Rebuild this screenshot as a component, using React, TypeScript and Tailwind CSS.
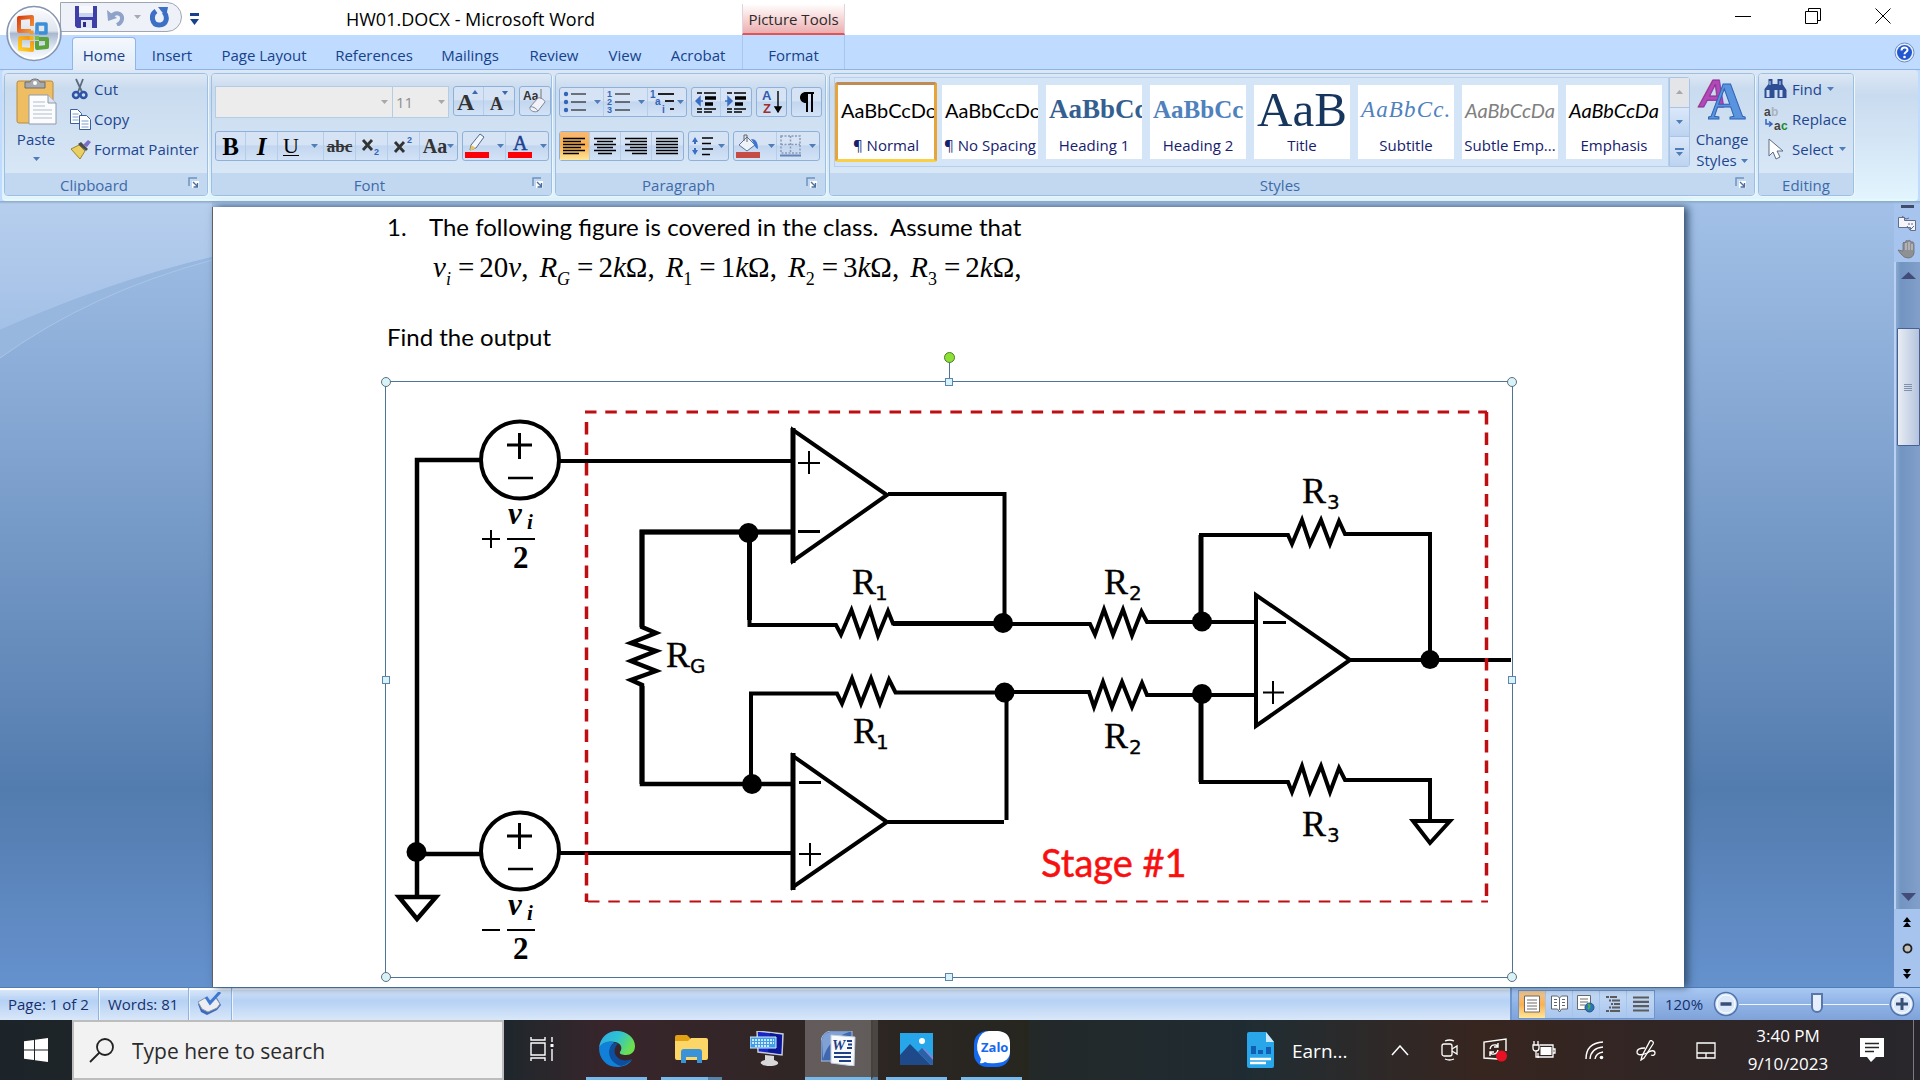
import { useState, type ReactNode } from 'react';
import clsx from 'clsx';

const tabs = [
  { name: 'Home', width: 'w-16' },
  { name: 'Insert', width: 'w-[72px]' },
  { name: 'Page Layout', width: 'w-[112px]' },
  { name: 'References', width: 'w-[108px]' },
  { name: 'Mailings', width: 'w-[84px]' },
  { name: 'Review', width: 'w-[84px]' },
  { name: 'View', width: 'w-[58px]' },
  { name: 'Acrobat', width: 'w-[88px]' },
];

const styleItems = [
  { name: '¶ Normal', sample: 'AaBbCcDc', look: 'font-[Lato,sans-serif] text-[20px] text-black' },
  { name: '¶ No Spacing', sample: 'AaBbCcDc', look: 'font-[Lato,sans-serif] text-[20px] text-black' },
  { name: 'Heading 1', sample: 'AaBbCc', look: 'font-["Liberation_Serif",serif] text-[27px] font-bold text-[#365f91]' },
  { name: 'Heading 2', sample: 'AaBbCc', look: 'font-["Liberation_Serif",serif] text-[25px] font-bold text-[#4f81bd]' },
  { name: 'Title', sample: 'AaB', look: 'font-["Liberation_Serif",serif] text-[49px] text-[#17365d]' },
  { name: 'Subtitle', sample: 'AaBbCc.', look: 'font-["Liberation_Serif",serif] text-[23px] italic tracking-wider text-[#4f81bd]' },
  { name: 'Subtle Emp...', sample: 'AaBbCcDa', look: 'font-[Lato,sans-serif] text-[20px] italic text-[#808080]' },
  { name: 'Emphasis', sample: 'AaBbCcDa', look: 'font-[Lato,sans-serif] text-[20px] italic text-black' },
];

function Arrow({ className = 'text-[#4f7db9]' }: { className?: string }) {
  return (
    <svg width="7" height="4" viewBox="0 0 7 4" className={clsx('shrink-0', className)}>
      <path d="M0 0h7L3.500 4z" fill="currentColor" />
    </svg>
  );
}

function Launcher() {
  return (
    <button aria-label="More options" className="absolute right-[7px] top-[4px]">
      <svg width="12" height="12" viewBox="0 0 12 12" fill="none">
        <path d="M1 9V1h8" stroke="#6f93bd" strokeWidth="1.500" />
        <path d="M4 4h7v7H4z" fill="#fff" />
        <path d="M5 5l4.500 4.500M9.500 6v4H5.500" stroke="#4a6f9e" strokeWidth="1.400" />
      </svg>
    </button>
  );
}

function Group({ title, className, launcher = true, children }: { title: string; className: string; launcher?: boolean; children: ReactNode }) {
  return (
    <section
      className={clsx(
        'flex flex-col overflow-hidden rounded-[4px] border border-[#9dbfe0] shadow-[1px_1px_0_#eef6fd,inset_1px_1px_0_#e8f1fb]',
        className,
      )}
    >
      <div className="flex h-[100px] bg-linear-to-b from-[#dde8f5] from-0% via-[#c9dbef] via-15% to-[#d8e7f6]">{children}</div>
      <div
        className={clsx(
          'relative flex flex-1 items-center justify-center bg-[#c1d8f0] pt-[2px] text-[15px] leading-5 text-[#3e6aaa]',
          launcher && 'pr-6',
        )}
      >
        {title}
        {launcher && <Launcher />}
      </div>
    </section>
  );
}

function Cells({ children }: { children: ReactNode }) {
  return (
    <div className="flex h-[30px] divide-x divide-[#b4cdea] rounded-[3px] border border-[#8fb0d9] bg-linear-to-b from-[#d5e3f4] from-45% via-[#c2d6ef] via-50% to-[#d3e3f6]">
      {children}
    </div>
  );
}

function Cell({ label, width, active, children }: { label: string; width: string; active?: boolean; children: ReactNode }) {
  return (
    <button
      aria-label={label}
      className={clsx(
        'flex shrink-0 items-center justify-center gap-1 text-black',
        width,
        active && 'bg-linear-to-b from-[#f8b973] via-[#fbb04e] to-[#ffe79a]',
      )}
    >
      {children}
    </button>
  );
}

function Lines({ rows }: { rows: number[][] }) {
  return (
    <svg width="23" height="18" viewBox="0 0 23 18" stroke="#000" strokeWidth="1.300">
      {rows.map(([a, b], i) => (
        <path key={i} d={`M${a} ${1.5 + i * 3}H${b}`} />
      ))}
    </svg>
  );
}

function OfficeOrb() {
  return (
    <button aria-label="Office Button" className="absolute left-[6px] top-[5px] z-10">
      <svg width="56" height="57" viewBox="0 0 56 57">
        <defs>
          <linearGradient id="orb" x1="0" y1="0" x2="0" y2="1">
            <stop offset="0" stopColor="#fdfdfe" />
            <stop offset=".45" stopColor="#dfe5ee" />
            <stop offset=".5" stopColor="#a9b8cf" />
            <stop offset=".75" stopColor="#dde6f2" />
            <stop offset="1" stopColor="#fff" />
          </linearGradient>
          <linearGradient id="orbRed" x1="0" y1="0" x2="1" y2="1">
            <stop offset="0" stopColor="#d9400f" />
            <stop offset="1" stopColor="#f59a3c" />
          </linearGradient>
          <linearGradient id="orbYellow" x1="0" y1="1" x2="1" y2="0">
            <stop offset="0" stopColor="#ffcf1f" />
            <stop offset="1" stopColor="#f0921c" />
          </linearGradient>
        </defs>
        <circle cx="28" cy="28.500" r="27" fill="url(#orb)" stroke="#8495b1" strokeWidth="1.500" />
        <circle cx="28" cy="28.500" r="25" fill="none" stroke="#fff" strokeWidth="1.500" />
        <g fill="none" strokeWidth="4" strokeLinejoin="round">
          <path d="M25 26H13V13l13-1v9" stroke="url(#orbRed)" />
          <path d="M31 27v-8h9v9h-7" stroke="#3b8fd6" strokeWidth="3.500" />
          <path d="M24 33H14v11l12 1V36" stroke="url(#orbYellow)" />
          <path d="M31 36v7l10-1v-8h-8" stroke="#5aa23a" />
        </g>
        <path d="M23.500 25.500h4v4h-4z" fill="#f29b30" />
        <path d="M29 25.500h4v4h-4z" fill="#4c9be0" />
        <path d="M23.500 31h4v4h-4z" fill="#f6b21b" />
        <path d="M29 31h4v4h-4z" fill="#7dbb45" />
      </svg>
    </button>
  );
}

function TitleBar() {
  return (
    <div className="flex h-[35px] bg-white pl-[60px]">
      <div className="relative mt-[2px] flex h-[30px] w-[122px] items-center rounded-r-[15px] border border-[#9ea6b2] bg-[#eef2f8] pl-[14px]">
        <button aria-label="Save">
          <svg width="22" height="22" viewBox="0 0 22 22">
            <path d="M0 0h22v22H2l-2-2z" fill="#3f3fa8" />
            <path d="M4 0h14v11H4z" fill="#f6f8fd" />
            <path d="M4 7h14v4H4z" fill="#c9d4ee" />
            <path d="M6 14h11v8H6z" fill="#dfe5f5" />
            <path d="M8 16h3v5H8z" fill="#2c2c86" />
          </svg>
        </button>
        <button aria-label="Undo" className="ml-[10px] flex items-center gap-[9px]">
          <svg width="18" height="17" viewBox="0 0 18 17" fill="none">
            <path d="M4 8c4-6 12-4 11 2-.3 3-3 5-5 6" stroke="#8fa3c8" strokeWidth="4" />
            <path d="M0 1l1 11 9-3z" fill="#8fa3c8" />
          </svg>
          <Arrow className="text-[#a5a9b0]" />
        </button>
        <button aria-label="Repeat" className="ml-[9px]">
          <svg width="20" height="21" viewBox="0 0 20 21" fill="none">
            <path d="M6 4C0 8 2 18 9 18c8 0 9-8 5-13" stroke="#3d6fc4" strokeWidth="5" />
            <path d="M8 0h10l-2 10z" fill="#3d6fc4" />
          </svg>
        </button>
      </div>
      <button aria-label="Customize Quick Access Toolbar" className="ml-[8px] mt-[3px] flex flex-col items-center justify-center gap-[3px]">
        <span className="h-[3px] w-[9px] bg-[#15428b]" />
        <svg width="9" height="6" viewBox="0 0 9 6">
          <path d="M0 0h9L4.500 6z" fill="#15428b" />
        </svg>
      </button>
      <h1 className="flex w-[543px] items-center justify-center pt-[3px] text-[18px] text-black">HW01.DOCX - Microsoft Word</h1>
      <div className="mt-1 flex w-[103px] items-center justify-center border-x border-b-2 border-x-[#dfd3de] border-b-[#e05555] bg-linear-to-b from-white to-[#ecaeb0] pt-[2px] text-[15px] text-[#2b2b2b]">
        Picture Tools
      </div>
      <div className="ml-auto mr-[2px] flex items-start">
        <button aria-label="Minimize" className="flex h-8 w-[70px] items-center justify-center">
          <svg width="16" height="16" viewBox="0 0 16 16" stroke="#000"><path d="M0 8.500h16" /></svg>
        </button>
        <button aria-label="Restore" className="flex h-8 w-[70px] items-center justify-center">
          <svg width="16" height="16" viewBox="0 0 16 16" stroke="#000" fill="none">
            <path d="M.5 3.500h12v12H.5zM3.500 3.500v-3h12v12h-3" />
          </svg>
        </button>
        <button aria-label="Close" className="flex h-8 w-[70px] items-center justify-center">
          <svg width="16" height="16" viewBox="0 0 16 16" stroke="#000"><path d="M.5.5l15 15M15.500.5l-15 15" /></svg>
        </button>
      </div>
    </div>
  );
}

function TabRow() {
  const [current, setCurrent] = useState('Home');
  return (
    <nav className="flex h-[35px] border-b border-[#8db2e3] bg-[#bfdbff] pl-[72px] text-[15px] text-[#15428b]">
      {tabs.map((tab) => (
        <button
          key={tab.name}
          onClick={() => setCurrent(tab.name)}
          className={clsx(
            'relative pt-[6px] text-center',
            tab.width,
            current === tab.name && '-mb-px mt-[2px] rounded-t-[4px] border border-b-0 border-[#8fb6ea] bg-linear-to-b from-[#f4f8fd] to-[#e1eaf6] pt-[3px]!',
          )}
        >
          {tab.name}
        </button>
      ))}
      <button className="w-[103px] border-x border-[#a9c6ee] pt-[6px] text-center">Format</button>
      <button aria-label="Help" className="ml-auto mr-[5px]">
        <svg width="21" height="21" viewBox="0 0 21 21">
          <circle cx="10.500" cy="10.500" r="9.500" fill="#e8f0fb" stroke="#6f8fbd" />
          <circle cx="10.500" cy="10.500" r="7.500" fill="#2357cf" />
          <path d="M7.500 8.500c0-4 6-4 6-.5 0 2-3 2-3 4.200" fill="none" stroke="#fff" strokeWidth="2" />
          <circle cx="10.500" cy="15" r="1.300" fill="#fff" />
        </svg>
      </button>
    </nav>
  );
}

function ClipboardGroup() {
  return (
    <Group title="Clipboard" className="w-[204px]">
      <button className="ml-[9px] flex w-[44px] flex-col items-center pt-[4px] text-[15px] leading-5 text-[#1d4690]">
        <svg width="41" height="47" viewBox="0 0 41 47">
          <rect x="1" y="3" width="36" height="42" rx="2" fill="#efbd62" stroke="#b98a3c" />
          <path d="M9 4h5c1-4 9-4 10 0h5v6H9z" fill="#a7a9ad" stroke="#6c6f75" />
          <circle cx="19" cy="5" r="2" fill="#fff" />
          <path d="M13 17h19l8 8v21H13z" fill="#fbfcfe" stroke="#8e99ab" />
          <path d="M32 17v8h8" fill="#dbe3ef" stroke="#8e99ab" />
          <path d="M17 24h12M17 28h12M17 32h19M17 36h19M17 40h19" stroke="#b3bccb" />
        </svg>
        <span className="mt-[4px]">Paste</span>
        <span className="mt-[8px]"><Arrow /></span>
      </button>
      <div className="flex flex-col pl-[12px] text-[15px] leading-[30px] text-[#1d4690]">
        <button className="flex items-center gap-[3px]">
          <svg width="21" height="22" viewBox="-1 0 21 22" fill="none">
            <path d="M5 1l6 13M12 1L7 14" stroke="#5d6b80" strokeWidth="1.800" />
            <circle cx="5" cy="17" r="3" stroke="#2e55a5" strokeWidth="2.500" />
            <circle cx="12.500" cy="17" r="3" stroke="#2e55a5" strokeWidth="2.500" />
          </svg>
          Cut
        </button>
        <button className="flex items-center gap-[3px]">
          <svg width="21" height="21" viewBox="0 0 21 21" stroke="#3b5e9e" fill="#fff">
            <path d="M.5.5h7l4 4v10H.5z" />
            <path d="M2.500 5h6M2.500 8h6M2.500 11h6" stroke="#7c9bd0" />
            <path d="M9.500 6.500h7l4 4v10h-11z" />
            <path d="M11.500 12h7M11.500 15h7M11.500 18h7" stroke="#7c9bd0" />
          </svg>
          Copy
        </button>
        <button className="flex items-center gap-[3px]">
          <svg width="21" height="19" viewBox="0 0 21 19">
            <path d="M1 9l8-4 6 6-5 8z" fill="#e9cf62" stroke="#9a8230" />
            <path d="M8 4l8 7 2-2-7-7z" fill="#4a4a4a" />
            <path d="M13 5l5-5 3 2-4 5z" fill="#7d6dc4" />
          </svg>
          Format Painter
        </button>
      </div>
    </Group>
  );
}

function FontGroup() {
  return (
    <Group title="Font" className="w-[341px]">
      <div className="flex flex-col gap-[13px] pl-[3px] pt-[12px]">
        <div className="flex h-8 items-start">
          <div className="relative">
            <select aria-label="Font" disabled className="block h-8 w-[178px] appearance-none border border-[#b5cbe6] bg-[#ececec]">
              <option></option>
            </select>
            <span className="absolute right-[5px] top-[14px]"><Arrow className="text-[#a8a8a8]" /></span>
          </div>
          <div className="relative">
            <select aria-label="Font Size" disabled className="block h-8 w-[56px] appearance-none border border-l-0 border-[#b5cbe6] bg-[#ececec] pl-[3px] text-[15px] text-[#8e8e8e] opacity-100">
              <option>11</option>
            </select>
            <span className="absolute right-[4px] top-[14px]"><Arrow className="text-[#a8a8a8]" /></span>
          </div>
          <div className="ml-1 flex gap-[4px]">
            <Cells>
              <Cell label="Grow Font" width="w-[30px]">
                <svg width="24" height="24" viewBox="0 0 24 24" className="overflow-visible">
                  <text x="0" y="21" className='font-["Liberation_Serif",serif] text-[24px] font-bold' fill="#333">A</text>
                  <path d="M15 5l3-4 3 4z" fill="#3b68b0" />
                </svg>
              </Cell>
              <Cell label="Shrink Font" width="w-[30px]">
                <svg width="24" height="24" viewBox="0 0 24 24" className="overflow-visible">
                  <text x="3" y="21" className='font-["Liberation_Serif",serif] text-[18px] font-bold' fill="#333">A</text>
                  <path d="M15 2l3 4 3-4z" fill="#3b68b0" />
                </svg>
              </Cell>
            </Cells>
            <Cells>
              <Cell label="Clear Formatting" width="w-[30px]">
                <svg width="26" height="26" viewBox="0 0 26 26" className="overflow-visible">
                  <text x="1" y="12" className='font-["Liberation_Sans",sans-serif] text-[12px] font-bold' fill="#333">Aa</text>
                  <path d="M19 1v12" stroke="#777" />
                  <path d="M8 19l8-9c2-1 7 2 7 4l-7 9c-3 2-9 0-8-4z" fill="#f0f2f8" stroke="#7e8798" />
                  <path d="M8 19c2-1 6 1 8 4" fill="none" stroke="#7e8798" />
                </svg>
              </Cell>
            </Cells>
          </div>
        </div>
        <div className="flex gap-[4px]">
          <Cells>
            <Cell label="Bold" width="w-[30px]"><b className='font-["Liberation_Serif",serif] text-[25px] leading-none'>B</b></Cell>
            <Cell label="Italic" width="w-[32px]"><i className='font-["Liberation_Serif",serif] text-[25px] font-bold leading-none'>I</i></Cell>
            <Cell label="Underline" width="w-[46px]">
              <span className='mr-2 border-b border-black font-["Liberation_Serif",serif] text-[22px] leading-[19px]'>U</span>
              <Arrow />
            </Cell>
            <Cell label="Strikethrough" width="w-[32px]"><s className='font-["Liberation_Serif",serif] text-[17px] font-bold leading-none text-[#333]'>abc</s></Cell>
            <Cell label="Subscript" width="w-[32px]">
              <svg width="22" height="22" viewBox="0 0 22 22" className="overflow-visible">
                <path d="M2 5l9 10M11 5L2 15" stroke="#333" strokeWidth="2.800" />
                <text x="13" y="20" className='font-["Liberation_Sans",sans-serif] text-[9px] font-bold' fill="#3464b8">2</text>
              </svg>
            </Cell>
            <Cell label="Superscript" width="w-[32px]">
              <svg width="22" height="22" viewBox="0 0 22 22" className="overflow-visible">
                <path d="M2 7l9 10M11 7L2 17" stroke="#333" strokeWidth="2.800" />
                <text x="14" y="8" className='font-["Liberation_Sans",sans-serif] text-[9px] font-bold' fill="#3464b8">2</text>
              </svg>
            </Cell>
            <Cell label="Change Case" width="w-[37px]">
              <span className='font-["Liberation_Serif",serif] text-[20px] font-bold leading-none text-[#333]'>Aa</span>
              <Arrow className="-ml-1 text-[#4f7db9]" />
            </Cell>
          </Cells>
          <Cells>
            <Cell label="Text Highlight Color" width="w-[43px]">
              <svg width="24" height="26" viewBox="0 0 24 26">
                <path d="M6 12L15 1l4 3-8 11-6 2z" fill="#f3f6fb" stroke="#4d6a96" />
                <path d="M6 12l5 3-6 3z" fill="#e8c65a" />
                <path d="M0 19h24v6H0z" fill="#fb0007" />
              </svg>
              <span className="ml-1"><Arrow /></span>
            </Cell>
            <Cell label="Font Color" width="w-[42px]">
              <svg width="24" height="26" viewBox="0 0 24 26" className="overflow-visible">
                <text x="5" y="17" className='font-["Liberation_Serif",serif] text-[20px]' fill="#1b3f94" stroke="#1b3f94" strokeWidth=".5">A</text>
                <path d="M0 19h24v6H0z" fill="#fb0007" />
              </svg>
              <span className="ml-1"><Arrow /></span>
            </Cell>
          </Cells>
        </div>
      </div>
    </Group>
  );
}

function ParagraphGroup() {
  return (
    <Group title="Paragraph" className="w-[271px]">
      <div className="flex flex-col gap-[14px] pl-[3px] pt-[13px]">
        <div className="flex gap-[4px]">
          <Cells>
            <Cell label="Bullets" width="w-[44px]">
              <svg width="24" height="24" viewBox="0 0 24 24">
                <g fill="#3464b8"><circle cx="3" cy="4" r="2.200" /><circle cx="3" cy="12" r="2.200" /><circle cx="3" cy="20" r="2.200" /></g>
                <path d="M8 4h15M8 12h15M8 20h15" stroke="#000" strokeWidth="1.200" />
              </svg>
              <span className="ml-[3px]"><Arrow /></span>
            </Cell>
            <Cell label="Numbering" width="w-[44px]">
              <svg width="24" height="24" viewBox="0 0 24 24" className="overflow-visible">
                <g className='font-["Liberation_Sans",sans-serif] text-[9px] font-bold' fill="#3464b8">
                  <text x="0" y="7">1</text><text x="0" y="15">2</text><text x="0" y="23">3</text>
                </g>
                <path d="M8 4h15M8 12h15M8 20h15" stroke="#000" strokeWidth="1.200" />
              </svg>
              <span className="ml-[3px]"><Arrow /></span>
            </Cell>
            <Cell label="Multilevel List" width="w-[38px]">
              <svg width="26" height="24" viewBox="0 0 26 24" className="overflow-visible">
                <g className='font-["Liberation_Sans",sans-serif] text-[10px] font-bold' fill="#3464b8">
                  <text x="0" y="8">1</text><text x="5" y="15">a</text><text x="12" y="23">i</text>
                </g>
                <path d="M8 4h16M15 11h9M20 19h4" stroke="#222" strokeWidth="1.800" />
              </svg>
              <Arrow className="-ml-[3px] text-[#4f7db9]" />
            </Cell>
          </Cells>
          <Cells>
            <Cell label="Decrease Indent" width="w-[29px]">
              <svg width="22" height="22" viewBox="0 0 22 22" stroke="#000">
                <path d="M2 2h5M9 2h12M2 18h5M9 18h12M2 21h5M9 21h8" strokeWidth="1.400" />
                <path d="M10 7h11M10 13h8" strokeWidth="3.500" />
                <path d="M8 10H3M5 6l-4 4 4 4z" stroke="#3b6fc6" fill="#3b6fc6" strokeWidth="1.500" />
              </svg>
            </Cell>
            <Cell label="Increase Indent" width="w-[30px]">
              <svg width="22" height="22" viewBox="0 0 22 22" stroke="#000">
                <path d="M2 2h5M9 2h12M2 18h5M9 18h12M2 21h5M9 21h8" strokeWidth="1.400" />
                <path d="M10 7h11M10 13h8" strokeWidth="3.500" />
                <path d="M0 10h5M3 6l4 4-4 4z" stroke="#3b6fc6" fill="#3b6fc6" strokeWidth="1.500" />
              </svg>
            </Cell>
          </Cells>
          <Cells>
            <Cell label="Sort" width="w-[29px]">
              <svg width="22" height="26" viewBox="0 0 22 26" className="overflow-visible">
                <g className='font-["Liberation_Sans",sans-serif] text-[13px] font-bold'>
                  <text x="1" y="11" fill="#2f5cae">A</text>
                  <text x="2" y="24" fill="#a02c2c">Z</text>
                </g>
                <path d="M17 2v19M14 18h6l-3 5z" stroke="#000" strokeWidth="1.400" />
              </svg>
            </Cell>
          </Cells>
          <Cells>
            <Cell label="Show/Hide ¶" width="w-[29px]">
              <svg width="16" height="22" viewBox="0 0 16 22">
                <path d="M15 1H7C-1 1-1 12 7 12V21h2V3h3v18h2V3h1z" fill="#000" />
              </svg>
            </Cell>
          </Cells>
        </div>
        <div className="flex gap-[4px]">
          <Cells>
            <Cell label="Align Left" width="w-[30px]" active><Lines rows={[[0, 22], [0, 18], [0, 22], [0, 18], [0, 22], [0, 16]]} /></Cell>
            <Cell label="Center" width="w-[31px]"><Lines rows={[[0, 22], [3, 19], [0, 22], [3, 19], [0, 22], [4, 18]]} /></Cell>
            <Cell label="Align Right" width="w-[31px]"><Lines rows={[[0, 22], [5, 22], [0, 22], [5, 22], [0, 22], [7, 22]]} /></Cell>
            <Cell label="Justify" width="w-[31px]"><Lines rows={[[0, 22], [0, 22], [0, 22], [0, 22], [0, 22], [0, 22]]} /></Cell>
          </Cells>
          <Cells>
            <Cell label="Line Spacing" width="w-[39px]">
              <svg width="22" height="20" viewBox="0 0 22 20">
                <path d="M0 6l3-5 3 5zM0 14l3 5 3-5z" fill="#3b6fc6" />
                <path d="M3 5v3M3 12v3" stroke="#3b6fc6" strokeWidth="2" />
                <path d="M10 2h11M10 7.500h9M10 13h11M10 18.500h8" stroke="#000" strokeWidth="1.300" />
              </svg>
              <Arrow />
            </Cell>
          </Cells>
          <Cells>
            <Cell label="Shading" width="w-[43px]">
              <svg width="24" height="25" viewBox="0 0 24 25">
                <path d="M3 11l8-8 8 8-8 6z" fill="#eef2f9" stroke="#5f7396" />
                <path d="M8 7V1h3v7" fill="none" stroke="#666" />
                <path d="M15 5c6 0 7 5 7 10-3-1-4-4-5-7z" fill="#3e76cf" />
                <path d="M0 18h24v6H0z" fill="#c44c45" />
              </svg>
              <span className="ml-1"><Arrow /></span>
            </Cell>
            <Cell label="Borders" width="w-[42px]">
              <svg width="21" height="22" viewBox="0 0 21 22" fill="none" stroke="#8a9bb8" strokeWidth="1.500">
                <path d="M1 1h19v17H1zM10.500 1v17M1 9.500h19" strokeDasharray="2 1.500" />
                <path d="M0 20.500h21" stroke="#6583b5" strokeWidth="2" />
              </svg>
              <span className="ml-1"><Arrow /></span>
            </Cell>
          </Cells>
        </div>
      </div>
    </Group>
  );
}

function StylesGroup() {
  return (
    <Group title="Styles" className="min-w-0 flex-1">
      <div className="mt-[3px] flex h-[90px] min-w-0 flex-1 pl-1">
        <div className="flex min-w-0 flex-1 gap-[2px] overflow-hidden border border-[#b6cfec] bg-[#d4e5f8] pt-[4px]">
          {styleItems.map((item, i) => (
            <button
              key={item.name}
              className={clsx(
                'flex h-[80px] w-[102px] shrink-0 flex-col overflow-hidden border-[3px] text-[15px] text-[#15206e]',
                i === 0 ? 'rounded-[3px] border-[#e8a437] border-b-[#f8cf45] border-t-[#c08a55] bg-white' : 'border-transparent bg-white bg-clip-padding',
              )}
            >
              <span className={clsx('flex h-[49px] w-full items-center overflow-hidden whitespace-nowrap pl-[3px] leading-none', item.look)}>
                {item.sample}
              </span>
              <span className="w-full whitespace-nowrap text-center leading-[22px]">{item.name}</span>
            </button>
          ))}
        </div>
        <div className="flex w-[21px] flex-col divide-y divide-[#a9c4e6] rounded-r-[3px] border border-[#a9c4e6]">
          <button aria-label="Row up" className="flex flex-1 items-center justify-center bg-[#e3e5e8]">
            <svg width="7" height="4" viewBox="0 0 7 4"><path d="M0 4h7L3.500 0z" fill="#a8a8a8" /></svg>
          </button>
          <button aria-label="Row down" className="flex flex-1 items-center justify-center bg-linear-to-b from-[#dbe8fa] to-[#bcd3f0]"><Arrow /></button>
          <button aria-label="More styles" className="flex flex-1 flex-col items-center justify-center gap-[2px] bg-linear-to-b from-[#dbe8fa] to-[#bcd3f0]">
            <span className="h-[2px] w-[9px] bg-[#4f7db9]" />
            <Arrow />
          </button>
        </div>
        <button className="w-[64px] text-[15px] leading-[21px] text-[#1d4690]">
          <svg width="46" height="44" viewBox="0 0 46 44" className="mx-auto overflow-visible">
            <text x="0" y="30" className='font-["Liberation_Sans",sans-serif] text-[38px] font-bold italic' fill="#b348b9" stroke="#8a2e92">A</text>
            <text x="9" y="42" className='font-["Liberation_Serif",serif] text-[52px] font-bold' fill="#5a94de" stroke="#2f63b4">A</text>
          </svg>
          <span className="mt-[8px] block">Change</span>
          <span className="flex items-center justify-center gap-1">Styles <Arrow /></span>
        </button>
      </div>
    </Group>
  );
}

function EditingGroup() {
  return (
    <Group title="Editing" className="w-[96px]" launcher={false}>
      <div className="flex flex-col items-start pl-[5px] text-[15px] leading-[30px] text-[#1d4690]">
        <button className="flex items-center gap-[5px]">
          <svg width="23" height="20" viewBox="0 0 22 20" fill="#2f4f94">
            <path d="M4 0h4v5h5V0h5v5l4 6v8h-9v-8h-3v8H0v-9l4-5z" />
            <path d="M2 11h3v7H2zM15 11h3v7h-3zM5 2h1v4H5zM15 2h1v4h-1z" fill="#cfdcf2" />
          </svg>
          Find <Arrow />
        </button>
        <button className="flex items-center gap-[4px]">
          <svg width="24" height="26" viewBox="0 0 24 26" className="overflow-visible">
            <g className='font-["Liberation_Sans",sans-serif] text-[12px] font-bold'>
              <text x="0" y="10" fill="#444">a</text>
              <text x="7" y="10" fill="#aab2bd">b</text>
              <text x="10" y="24" fill="#444">a</text>
              <text x="17" y="24" fill="#1f8a2a">c</text>
            </g>
            <path d="M2 13v5h5M5 15.500l3 2.500-3 2.500" stroke="#3464b8" fill="none" strokeWidth="1.500" />
          </svg>
          Replace
        </button>
        <button className="flex items-center gap-[6px] pl-1">
          <svg width="18" height="22" viewBox="0 0 18 22">
            <path d="M1 1v17l4-4 3 7 4-2-3-6h6z" fill="#fff" stroke="#5c6c86" />
          </svg>
          Select <Arrow />
        </button>
      </div>
    </Group>
  );
}

function Eq({ name, sub, value }: { name: string; sub: ReactNode; value: ReactNode }) {
  return (
    <span className="flex items-baseline gap-[7px]">
      <span>
        <i>{name}</i>
        <span className="align-[-8px] text-[18px] leading-none">{sub}</span>
      </span>
      <span className="flex items-baseline gap-[5px]">
        <span>=</span>
        <span>{value},</span>
      </span>
    </span>
  );
}

function Handle({ className, round }: { className: string; round?: boolean }) {
  return (
    <span
      className={clsx(
        'absolute border bg-[#d8f3f7]',
        round ? 'size-[10px] rounded-full border-[#5f6f7c]' : 'size-[8px] border-[#5c86ad]',
        className,
      )}
    />
  );
}

const labels = [
  { x: 852, y: 594, s: '1', dx: 23 },
  { x: 853, y: 743, s: '1', dx: 23 },
  { x: 666, y: 667, s: 'G', dx: 24 },
  { x: 1104, y: 594, s: '2', dx: 25 },
  { x: 1104, y: 748, s: '2', dx: 25 },
  { x: 1302, y: 503, s: '3', dx: 25 },
  { x: 1302, y: 836, s: '3', dx: 25 },
];

function Circuit() {
  return (
    <svg viewBox="386 382 1126 595" className="block w-full" role="img" aria-label="Instrumentation amplifier circuit">
      <g fill="none" stroke="#000" strokeWidth="4">
        {/* sources and ground */}
        <path d="M481 460H417V896M417 854H481" strokeWidth="4.500" />
        <ellipse cx="520" cy="460" rx="39" ry="38.500" />
        <ellipse cx="520" cy="851" rx="39" ry="38.500" />
        <path d="M399 897h37l-19 22z" strokeWidth="4.500" />
        <path d="M559 461H791M559 853H791" />
        <path d="M507 445h25M519.500 433v26M507 836h25M519.500 823v26" strokeWidth="3" />
        <path d="M508 478h25M508 869h25" strokeWidth="2.500" />

        {/* input amplifiers */}
        <path d="M793 430V561L887 495zM793 756V887L887 822z" />
        <path d="M793 428V563M793 753V890" strokeWidth="5" />
        <path d="M798 463h22M809 451v23M799 854h22M810 843v23" strokeWidth="2" />
        <path d="M798 531.500h22M799 782.500h22" strokeWidth="3" />
        <path d="M888 494H1004.500V623M888 822H1004M1006.500 820V692" />

        {/* gain resistor */}
        <path d="M792 532H642V627l14 6-25 10 25 8-25 10 25 10-25 9 11 5V784H792" strokeWidth="4.500" />
        <path d="M792 532H642V627M642 686V784" strokeWidth="5" />

        {/* feedback R1 pair */}
        <path d="M749.500 533V625H836l5 9.500 10.500-24.500 8.500 24.500 10-24.500 8 25.500 10-24.500 5 12.500H1003" />
        <path d="M751 784V693.500H837l5 10 10-25 9 25 10-25 9 25 9-24 6.500 13H1004" />
        <path d="M893 623.500H1003M749.500 533V620" strokeWidth="5" />

        {/* R2 pair */}
        <path d="M1003 624H1090l5 10.500 9-25 9 25 10-25 9 26 9.500-24 5.500 10.500H1256" />
        <path d="M1004 692H1089l5 15 9-25 9 25 10-25 10 25 10-24 5 12H1256" />

        {/* output stage */}
        <path d="M1256 595V726L1350 660zM1350 660H1511" />
        <path d="M1263 622.500h23" strokeWidth="3" />
        <path d="M1263 692.500h21M1273 681v23" strokeWidth="2" />
        <path d="M1201 621V535H1288l4 9 10-24 8 24 11-24 9 24 9-23 6 13H1430V660" />
        <path d="M1201 694V782H1288l4 10 10-26 8 26 11-26 9 26 9-24 6 12H1430V821" />
        <path d="M1201 621V535M1201 694V782" strokeWidth="5" />
        <path d="M1413 821h37l-20 22z" />
      </g>

      <g fill="#000">
        <circle cx="416.500" cy="852" r="10" />
        <circle cx="748.500" cy="533" r="10" />
        <circle cx="752" cy="784" r="10" />
        <circle cx="1003" cy="623" r="10" />
        <circle cx="1004.500" cy="692.500" r="10" />
        <circle cx="1202" cy="621.500" r="10" />
        <circle cx="1202" cy="694" r="10" />
        <circle cx="1430" cy="659.500" r="9.500" />
      </g>

      <g fill="none" stroke="#c00d12">
        <path d="M585 412H1487" strokeWidth="3" strokeDasharray="11.500 8.800" />
        <path d="M586.500 422V902" strokeWidth="3.500" strokeDasharray="12.500 8" />
        <path d="M1486.500 412V902" strokeWidth="3.500" strokeDasharray="12.500 8" />
        <path d="M588 901.500H1488" strokeWidth="2" strokeDasharray="11.500 8.800" />
      </g>

      <g className='font-["Liberation_Serif",serif] text-[36px]' fill="#000" stroke="#000" strokeWidth=".3">
        {labels.map((l) => (
          <g key={`${l.x}-${l.y}`}>
            <text x={l.x} y={l.y}>R</text>
            <text x={l.x + l.dx} y={l.y + 6} className='font-["DejaVu_Sans",sans-serif] text-[20px]'>{l.s}</text>
          </g>
        ))}
      </g>

      {[0, 391].map((dy) => (
        <g key={dy}>
          <g className='font-["Liberation_Serif",serif] font-bold' fill="#000">
            <text x="508" y={524 + dy} className="text-[31px] italic">v</text>
            <text x="527" y={529 + dy} className="text-[21px] italic">i</text>
            <text x="513" y={568 + dy} className="text-[31px]">2</text>
          </g>
          <path d={`M507 ${539 + dy}h28M482 ${539 + dy}h18`} stroke="#000" strokeWidth="2" />
        </g>
      ))}
      <path d="M491 530v18" stroke="#000" strokeWidth="2" />

      <text x="1041" y="877" className='font-[Lato,sans-serif] text-[38px]' fill="#f81010" stroke="#f81010" strokeWidth=".5">Stage #1</text>
    </svg>
  );
}

function Workspace() {
  return (
    <main className="relative flex min-h-0 flex-1 bg-linear-to-b from-[#a3c1e8] via-[#537cae] via-75% to-[#6591cd]">
      <div className="absolute inset-x-0 top-0 h-[3px] bg-linear-to-b from-[#8fa5c4] to-transparent" />
      <div className="w-[212px] overflow-hidden">
        <svg width="212" height="160" viewBox="0 0 212 160">
          <defs>
            <linearGradient id="sky" x1="0" y1="0" x2="0" y2="1">
              <stop offset="0" stopColor="#b7cfee" />
              <stop offset="1" stopColor="#a3c0e6" />
            </linearGradient>
          </defs>
          <path d="M0 0h212v56Q110 80 0 129z" fill="url(#sky)" />
          <path d="M0 129Q110 80 212 56v3Q90 92 0 157z" fill="#97b7de" />
          <path d="M0 157Q90 92 212 59" fill="none" stroke="#a9c5ea" />
        </svg>
      </div>
      <article className="mt-[6px] min-w-0 flex-1 overflow-hidden border-l border-[#606060] bg-white pl-[172px] pr-[171px] pt-[4px] text-black shadow-[4px_0_8px_#33506f]">
        <ol className="pl-[2px] font-[Lato,sans-serif] text-[24px] leading-8">
          <li className="flex">
            <span className="w-[42px]">1.</span>
            <span className="whitespace-pre">The following figure is covered in the class.  Assume that</span>
          </li>
        </ol>
        <p className='mt-[4px] flex h-10 items-baseline gap-[11px] pl-[48px] font-["Liberation_Serif",serif] text-[29px] leading-10'>
          <Eq name="v" sub={<i>i</i>} value={<>20<i>v</i></>} />
          <Eq name="R" sub={<i>G</i>} value={<>2<i>k</i>Ω</>} />
          <Eq name="R" sub="1" value={<>1<i>k</i>Ω</>} />
          <Eq name="R" sub="2" value={<>3<i>k</i>Ω</>} />
          <Eq name="R" sub="3" value={<>2<i>k</i>Ω</>} />
        </p>
        <p className="mt-[34px] pl-[2px] font-[Lato,sans-serif] text-[24px] leading-8">Find the output</p>
        <figure className="relative mt-7 border border-[#4e7399]">
          <Circuit />
          <span className="absolute -top-[20px] left-1/2 h-5 w-px bg-[#4e7399]" />
          <span className="absolute -top-[30px] left-1/2 -ml-[5px] size-[11px] rounded-full border border-[#4f7a2a] bg-[#8be234]" />
          <Handle round className="-left-[5px] -top-[5px]" />
          <Handle round className="-right-[5px] -top-[5px]" />
          <Handle round className="-bottom-[5px] -left-[5px]" />
          <Handle round className="-bottom-[5px] -right-[5px]" />
          <Handle className="-top-[4px] left-1/2 -ml-[4px]" />
          <Handle className="-bottom-[4px] left-1/2 -ml-[4px]" />
          <Handle className="-left-[4px] top-1/2 -mt-[4px]" />
          <Handle className="-right-[4px] top-1/2 -mt-[4px]" />
        </figure>
      </article>
      <div className="w-[210px]" />
      <aside className="flex w-[26px] flex-col items-center bg-[#a6c4ee]">
        <button aria-label="Split" className="mt-[4px] h-[3px] w-[13px] bg-[#3f4c6b]" />
        <button aria-label="View Ruler" className="mt-[6px]">
          <svg width="18" height="18" viewBox="0 0 18 18" fill="#f4f4fa" stroke="#5f6f8c">
            <path d="M.5 3.500h6v3h11v10h-5v-3H.5z" />
            <path d="M4 2l4 3 3-1M9 12l3 4 4-4M11 9v2M14 9v2" fill="none" />
          </svg>
        </button>
        <button aria-label="Pan" className="mt-[7px]">
          <svg width="18" height="20" viewBox="0 0 18 20" fill="#8f9094" stroke="#6d6f75" strokeWidth=".8">
            <path d="M0 11l5 1V4q1-2 2 0 1-4 3-2 2-2 3 1 3-1 3 3v8q-1 5-6 5-4 0-7-4z" />
            <path d="M8 4v7M11 3v8M14 5v6" stroke="#e4e4e8" />
          </svg>
        </button>
        <div className="mt-[3px] flex w-full flex-1 flex-col items-center border-l-2 border-[#b8d1f5] bg-linear-to-r from-[#8aa9cf] via-[#7294c1] via-20% to-[#829fca]">
          <button aria-label="Scroll up" className="mt-[10px]">
            <svg width="15" height="7" viewBox="0 0 15 7"><path d="M0 7h15L7.500 0z" fill="#414d78" /></svg>
          </button>
          <button aria-label="Scroll thumb" className="mt-[49px] flex h-[118px] w-[23px] flex-col items-center justify-center gap-[1px] rounded-[1px] border border-[#4a5f93] bg-linear-to-r from-[#e9edf3] to-[#b4c4de]">
            <span className="h-px w-[8px] bg-[#8290ab]" />
            <span className="h-px w-[8px] bg-[#8290ab]" />
            <span className="h-px w-[8px] bg-[#8290ab]" />
            <span className="h-px w-[8px] bg-[#8290ab]" />
          </button>
          <button aria-label="Scroll down" className="mb-[8px] mt-auto">
            <svg width="15" height="8" viewBox="0 0 15 8"><path d="M0 0h15L7.500 8z" fill="#414d78" /></svg>
          </button>
        </div>
        <div className="flex h-[78px] flex-col items-center justify-between py-[8px]">
          <button aria-label="Previous Page">
            <svg width="8" height="11" viewBox="0 0 8 11"><path d="M0 5l4-5 4 5zM0 10l4-5 4 5z" fill="#000" /></svg>
          </button>
          <button aria-label="Select Browse Object">
            <svg width="11" height="11" viewBox="0 0 11 11"><circle cx="5.500" cy="5.500" r="4" fill="#c4c2ba" stroke="#222" strokeWidth="1.800" /></svg>
          </button>
          <button aria-label="Next Page">
            <svg width="8" height="11" viewBox="0 0 8 11"><path d="M0 1l4 5 4-5zM0 6l4 5 4-5z" fill="#000" /></svg>
          </button>
        </div>
      </aside>
    </main>
  );
}

function StatusBar() {
  const [zoom, setZoom] = useState(52);
  const statusItem = 'flex h-full items-center border-r border-[#8fb3e3] shadow-[1px_0_0_#eef5fd]';
  return (
    <footer className="flex h-[33px] border-t border-[#4f7db5] bg-linear-to-b from-[#d9e7f9] from-5% via-[#b5d1f4] via-40% to-[#d9e7f9] text-[15px] text-[#15306e] shadow-[inset_0_2px_0_#fff]">
      <button className={clsx(statusItem, 'w-[99px] pl-[8px]')}>Page: 1 of 2</button>
      <button className={clsx(statusItem, 'w-[90px] pl-[9px]')}>Words: 81</button>
      <button aria-label="Proofing" className={clsx(statusItem, 'w-[43px] pl-[8px]')}>
        <svg width="25" height="24" viewBox="0 0 25 24">
          <path d="M1 12l7-5 5 3 7-4 4 7-4 5-10 5-6-3z" fill="#3e68bd" />
          <path d="M1 10l7-4 5 3 6-3 4 6-3 4-9 4-6-3z" fill="#eceef2" stroke="#8b95a8" />
          <path d="M9 5l4 6L23 0" fill="none" stroke="#3f78d2" strokeWidth="3" />
        </svg>
      </button>
      <div className="ml-auto flex h-full items-center border-l-2 border-[#6f97d0] bg-linear-to-b from-[#a9c8f3] via-[#8fb2e6] via-50% to-[#7fa3d9] pl-[6px]">
        <div className="flex h-[29px] divide-x divide-[#a5c3eb] border border-[#6f94cb] bg-linear-to-b from-[#c6dbf6] to-[#a9c6ee]">
          <button aria-label="Print Layout" className="flex w-[27px] items-center justify-center bg-linear-to-b from-[#efc793] via-[#fbb04e] to-[#ffe79a]">
            <svg width="16" height="18" viewBox="0 0 16 18" fill="#fff" stroke="#6a6a6a"><path d="M.5 1h15v16H.5z" /><path d="M3 5h10M3 8h10M3 11h10M3 14h10" /></svg>
          </button>
          <button aria-label="Full Screen Reading" className="flex w-[27px] items-center justify-center">
            <svg width="17" height="18" viewBox="0 0 17 18" fill="#fff" stroke="#5f6672"><path d="M.5 1h6l2 2 2-2h6v13h-6l-2 3-2-3h-6z" /><path d="M8.500 3v12M3 4.500h3M3 7.500h3M3 10.500h3M11 4.500h3M11 7.500h3M11 10.500h3" /></svg>
          </button>
          <button aria-label="Web Layout" className="flex w-[27px] items-center justify-center">
            <svg width="18" height="18" viewBox="0 0 18 18" fill="#fff" stroke="#6a6a6a"><path d="M.5.5h13v14H.5z" /><path d="M3 4h8M3 7h8M3 10h5" /><circle cx="12.500" cy="12.500" r="4.500" fill="#2a77b8" stroke="#1f5687" /><path d="M11 9q3 2 0 5" stroke="#56b04a" strokeWidth="2" fill="none" /></svg>
          </button>
          <button aria-label="Outline" className="flex w-[27px] items-center justify-center">
            <svg width="15" height="16" viewBox="0 0 15 16" stroke="#5c5c5c" strokeWidth="1.800"><path d="M0 1h3M4 1h7M3 4.500h2M6 4.500h8M5 8h2M8 8h6M3 11.500h2M6 11.500h8M0 15h3M4 15h10" /></svg>
          </button>
          <button aria-label="Draft" className="flex w-[27px] items-center justify-center">
            <svg width="16" height="16" viewBox="0 0 16 16" stroke="#5c5c5c" strokeWidth="2.200"><path d="M0 1.500h16M0 5.800h16M0 10.200h16M0 14.500h16" /></svg>
          </button>
        </div>
        <button className="w-[58px] text-center">120%</button>
        <button aria-label="Zoom Out">
          <svg width="26" height="26" viewBox="0 0 26 26">
            <circle cx="13" cy="13" r="11.500" fill="#dbe8fa" stroke="#4f74ad" strokeWidth="1.500" />
            <circle cx="13" cy="13" r="9" fill="none" stroke="#fff" />
            <path d="M7.500 13h11" stroke="#3b4f74" strokeWidth="3.500" />
          </svg>
        </button>
        <input
          type="range"
          aria-label="Zoom"
          value={zoom}
          onChange={(e) => setZoom(Number(e.target.value))}
          className="h-6 w-[150px] appearance-none bg-transparent [&::-webkit-slider-runnable-track]:h-px [&::-webkit-slider-runnable-track]:bg-[#eef5ff] [&::-webkit-slider-thumb]:-mt-[11px] [&::-webkit-slider-thumb]:h-5 [&::-webkit-slider-thumb]:w-3 [&::-webkit-slider-thumb]:appearance-none [&::-webkit-slider-thumb]:rounded-b-[6px] [&::-webkit-slider-thumb]:border-2 [&::-webkit-slider-thumb]:border-[#5777ab] [&::-webkit-slider-thumb]:bg-[#e6effb]"
        />
        <button aria-label="Zoom In" className="mr-[5px]">
          <svg width="26" height="26" viewBox="0 0 26 26">
            <circle cx="13" cy="13" r="11.500" fill="#dbe8fa" stroke="#4f74ad" strokeWidth="1.500" />
            <circle cx="13" cy="13" r="9" fill="none" stroke="#fff" />
            <path d="M7 13h12M13 7v12" stroke="#3b4f74" strokeWidth="3" />
          </svg>
        </button>
      </div>
    </footer>
  );
}

function AppButton({ label, running, active, stacked, children }: { label: string; running?: boolean; active?: boolean; stacked?: boolean; children: ReactNode }) {
  return (
    <button aria-label={label} className="flex w-[75px] justify-center">
      <span
        className={clsx(
          'flex h-full items-center justify-center border-b-[3px]',
          active ? 'w-[66px] bg-white/25' : stacked ? 'w-[47px] pl-[14px]' : 'w-[61px]',
          running || active ? 'border-[#76b9ed]' : 'border-transparent',
        )}
      >
        {children}
      </span>
      {active && <span className="w-[7px] border-b-[3px] border-l-2 border-b-[#5583a9] border-l-[#45423a] bg-white/15" />}
      {stacked && <span className="w-[14px] border-b-[3px] border-[#5583a9]" />}
    </button>
  );
}

function Taskbar() {
  return (
    <div className="flex h-[60px] bg-linear-to-r from-[#1d2429] via-[#2a2a20] to-[#26272c]">
      <button aria-label="Start" className="flex w-[72px] items-center justify-center">
        <svg width="24" height="24" viewBox="0 0 24 24" fill="#fff">
          <path d="M0 3.300L10 2v9.400H0zM11 1.800L24 0v11.400H11zM0 12.500h10V22L0 20.700zM11 12.500h13V24l-13-1.800z" />
        </svg>
      </button>
      <label className="flex w-[432px] items-center gap-[18px] border-2 border-[#bdbdbd] bg-[#f2f2f2] pl-[15px]">
        <svg width="25" height="25" viewBox="0 0 25 25" fill="none" stroke="#222" strokeWidth="1.800">
          <circle cx="16" cy="9" r="8" />
          <path d="M10.500 14.500L1 24" />
        </svg>
        <input placeholder="Type here to search" className="min-w-0 flex-1 bg-transparent pt-1 text-[21px] outline-none placeholder:text-[#2b2b2b]" />
      </label>
      <div className="flex flex-1 bg-linear-to-r from-[#1e272c] via-[#262722] to-[#1f2b32]">
        <div className="flex bg-linear-to-r from-[#1e272c] via-[#38252b] via-20% to-[#26261f]">
          <AppButton label="Task View">
            <svg width="24" height="24" viewBox="0 0 24 24" fill="none" stroke="#fff" strokeWidth="1.400">
              <path d="M1 0v3h14V0M1 24v-3h14v3M1 6h14v12H1zM22 0v5M22 12v12" />
              <path d="M20.500 7h3v3h-3z" fill="#fff" stroke="none" />
            </svg>
          </AppButton>
          <AppButton label="Microsoft Edge" running>
            <svg width="36" height="36" viewBox="0 0 36 36">
              <defs>
                <linearGradient id="edgeTop" x1="0" y1="0" x2="1" y2=".4">
                  <stop offset="0" stopColor="#2fa8e6" />
                  <stop offset=".55" stopColor="#2fc3d2" />
                  <stop offset="1" stopColor="#6be04f" />
                </linearGradient>
              </defs>
              <path d="M0 17C1 7 8 0 18 0s18 7 18 15c0 6-4 9-9 9-4 0-7-1-6-3 3-4 1-9-5-10C9 10 3 12 0 17z" fill="url(#edgeTop)" />
              <path d="M0 17C3 10 12 9 16 12c-7 1-9 18 8 20 3 0 6-1 9-3-4 5-9 7-15 7C7 36 0 27 0 17z" fill="#1180d8" />
              <path d="M16 12c-9 4-8 19 6 23 5-1 9-4 11-7-8 3-14 1-17-5-1-4 0-8 3-10-1-1-2-1-3-1z" fill="#0d4f9e" />
            </svg>
          </AppButton>
          <AppButton label="File Explorer" running stacked>
            <svg width="33" height="28" viewBox="0 0 33 28" className="shrink-0">
              <path d="M0 2q0-2 2-2h10l3 3v6H0z" fill="#e2a012" />
              <path d="M0 6h13l3-3h15q2 0 2 2v18q0 2-2 2H2q-2 0-2-2z" fill="#fdd668" />
              <path d="M6 28V17q0-3 3-3h15q3 0 3 3v11h-5v-6H11v6z" fill="#3a93d8" />
            </svg>
          </AppButton>
          <AppButton label="On-Screen Keyboard">
            <svg width="34" height="36" viewBox="0 0 34 36">
              <path d="M7 0l26 3-1 21-24-3z" fill="#1527c4" stroke="#c9ccd4" strokeWidth="1.500" />
              <path d="M20 2l12 2-1 19-13-2z" fill="#0b1797" />
              <path d="M15 24l9 1v4c7 2 5 6-4 6s-13-4-5-6z" fill="#d8d8da" />
              <path d="M0 6h26v11H0z" fill="#3f9ee8" stroke="#dbeaf8" />
              <path d="M2 9h22M2 12h22M5 15h15" stroke="#fff" strokeDasharray="2 1" strokeWidth="1.500" />
            </svg>
          </AppButton>
          <AppButton label="Microsoft Word" active>
            <svg width="35" height="35" viewBox="0 0 35 35">
              <path d="M9 0h22v30H0V10Q1 2 9 0z" fill="#3f68ae" stroke="#a9c0e6" />
              <path d="M2 28q5-20 26-27H9Q1 3 1 10z" fill="#9cb9e4" opacity=".7" />
              <path d="M10 4l24 2-1 29-23-3z" fill="#f7f9fd" stroke="#c3cddd" />
              <text x="11" y="19" className='font-["Liberation_Serif",serif] text-[15px] font-bold italic' fill="#1d3f86">W</text>
              <path d="M26 10h5M27 13.500h4M26 17h5M13 22h17M13 26h17M18 30h12" stroke="#1d3f86" strokeWidth="2" />
            </svg>
          </AppButton>
          <AppButton label="Photos" running>
            <svg width="33" height="32" viewBox="0 0 33 32">
              <path d="M0 0h33v32H0z" fill="#27a6ea" />
              <path d="M14 25l10-10 9 9v8H14z" fill="#7d86d8" />
              <path d="M0 22l10-11 21 21H0z" fill="#1e4a8a" />
              <path d="M18 19l4-4 11 12v5H31z" fill="#2a62a8" />
              <circle cx="22" cy="8" r="3" fill="#fff" />
            </svg>
          </AppButton>
          <AppButton label="Zalo" running>
            <svg width="36" height="36" viewBox="0 0 36 36">
              <rect width="36" height="36" rx="13" fill="#1568f0" />
              <path d="M15 0h9q12 1 12 12v8q0 11-13 12-9 1-12-1-3 2-5 1l1-4Q1 18 4 10 7 0 15 0z" fill="#fff" />
              <text x="7" y="21" className='font-["Open_Sans",sans-serif] text-[13px] font-bold' fill="#1568f0">Zalo</text>
            </svg>
          </AppButton>
        </div>
      </div>
      <div className="flex bg-linear-to-r from-[#1f2d33] via-[#37251f] via-35% to-[#28262c] text-white">
        <button className="flex w-[121px] items-center gap-[18px] text-[19px]">
          <svg width="27" height="36" viewBox="0 0 27 36">
            <path d="M2 0h17l8 10v24q0 2-2 2H2q-2 0-2-2V2q0-2 2-2z" fill="#29a5e9" />
            <path d="M19 0l8 10h-8z" fill="#cdeafb" />
            <path d="M4 14h5v8H4zM11 18h5v4h-5zM19 15h5v7h-5z" fill="#115fb4" />
            <path d="M3 27h21M3 31h16" stroke="#fff" strokeWidth="2.500" />
          </svg>
          <span className="pt-[2px]">Earn...</span>
        </button>
        <button aria-label="Show hidden icons" className="flex w-16 items-center justify-center">
          <svg width="18" height="11" viewBox="0 0 18 11" fill="none" stroke="#fff" strokeWidth="1.500"><path d="M1 10l8-9 8 9" /></svg>
        </button>
        <button aria-label="Meet Now" className="flex w-[34px] items-center justify-center">
          <svg width="17" height="22" viewBox="0 0 17 22" fill="none" stroke="#fff" strokeWidth="1.300">
            <path d="M4 2q4.500-2 9 0M4 20q4.500 2 9 0" />
            <rect x="1" y="5" width="10" height="12" rx="2" />
            <path d="M11 10l5-3v8l-5-3" />
          </svg>
        </button>
        <button aria-label="Windows Update" className="flex w-[60px] items-center justify-center">
          <svg width="26" height="24" viewBox="0 0 26 24" fill="none" stroke="#fff" strokeWidth="1.400">
            <path d="M15 21L1 20V4l22-3v12" />
            <path d="M7 11q1-5 6-4l2 1M15 5v4h-4M15 12q-1 5-6 4l-2-1M7 18v-4h4" />
            <circle cx="18.500" cy="18" r="5.500" fill="#e81123" stroke="none" />
          </svg>
        </button>
        <button aria-label="Battery" className="flex w-[36px] items-center justify-center">
          <svg width="24" height="18" viewBox="0 0 24 18" fill="none" stroke="#fff" strokeWidth="1.300">
            <path d="M8 4h13v12H6v-4M21 8h2v4h-2" />
            <path d="M8.500 6h11v8h-11z" fill="#fff" stroke="none" />
            <path d="M1 4h6v3q0 3-3 3T1 7zM2 4V0M6 4V0M4 10v6h3" />
          </svg>
        </button>
        <button aria-label="Wi-Fi" className="flex w-16 items-center justify-center">
          <svg width="19" height="19" viewBox="0 0 19 19" fill="none" stroke="#fff" strokeWidth="1.400">
            <path d="M1 18Q1 2 18 1M5 18Q6 7 18 6M10 18q1-6 8-7" />
            <circle cx="16.500" cy="16.500" r="1.800" fill="#fff" stroke="none" />
          </svg>
        </button>
        <button aria-label="Windows Ink" className="flex w-10 items-center justify-center">
          <svg width="20" height="21" viewBox="0 0 20 21" fill="none" stroke="#fff" strokeWidth="1.300">
            <path d="M16 1q2 1 1 3L8 18l-3 2 1-4L14 1q1-1 2 0z" />
            <path d="M9 8Q1 8 1 12c0 4 6 3 10 1 4-3 8-3 8 0 0 2-2 3-4 2" />
          </svg>
        </button>
        <button aria-label="Touchpad" className="flex w-20 items-center justify-center">
          <svg width="20" height="17" viewBox="0 0 20 17" fill="none" stroke="#fff" strokeWidth="1.300"><path d="M1 1h18v15H1zM1 11h18M10 11v5" /></svg>
        </button>
        <button className="w-[84px] whitespace-nowrap text-center text-[17px] leading-7">
          3:40 PM
          <br />
          9/10/2023
        </button>
        <button aria-label="Notifications" className="flex w-[83px] items-center justify-center">
          <svg width="24" height="24" viewBox="0 0 24 24">
            <path d="M0 0h24v19h-8l-5 5-4-5H0z" fill="#fff" />
            <path d="M5 5.500h14M5 9.500h14M5 13.500h9" stroke="#26262a" strokeWidth="1.400" />
          </svg>
        </button>
        <button aria-label="Show desktop" className="w-[7px] border-l border-[#7c7c80]" />
      </div>
    </div>
  );
}

export default function App() {
  return (
    <div className='flex h-screen flex-col overflow-hidden bg-[#bfdbff] font-["Open_Sans",sans-serif]'>
      <header className="relative">
        <OfficeOrb />
        <TitleBar />
        <TabRow />
        <div className="mx-[2px] flex h-[131px] gap-[3px] rounded-[4px] border-b-2 border-[#e2fbff] bg-linear-to-b from-[#dce8f5] via-[#c9dbef] via-20% to-[#e2f4fd] px-[2px] pb-[3px] pt-[3px]">
          <ClipboardGroup />
          <FontGroup />
          <ParagraphGroup />
          <StylesGroup />
          <EditingGroup />
          <div className="w-[59px]" />
        </div>
      </header>
      <Workspace />
      <StatusBar />
      <Taskbar />
    </div>
  );
}
